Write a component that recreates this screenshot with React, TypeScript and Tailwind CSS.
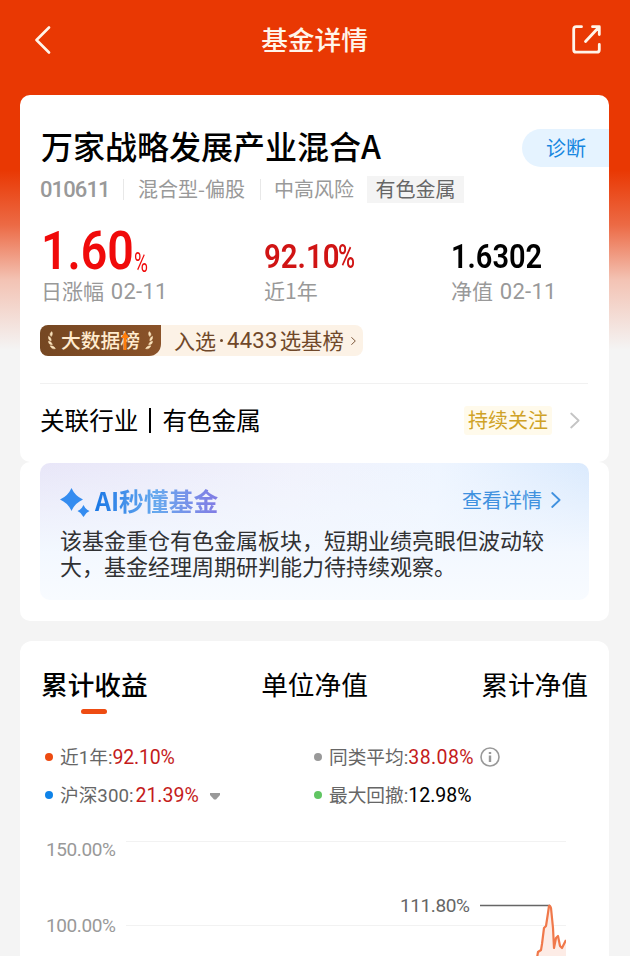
import type { ReactNode } from 'react';

const tabs = ['累计收益', '单位净值', '累计净值'];

function Chevron({ className }: { className: string }) {
  return (
    <svg viewBox="0 0 10 16" fill="none" stroke="currentColor" className={className} aria-hidden>
      <path d="M1.2 1 8.6 8 1.2 15" strokeWidth="1.8" strokeLinecap="round" strokeLinejoin="round" />
    </svg>
  );
}

function Laurel({ className }: { className: string }) {
  return (
    <svg viewBox="0 0 9 22" fill="#fbe3bd" stroke="#fbe3bd" strokeWidth="0.5" className={className} aria-hidden>
      <path d="M4.3 1C1.8 3 1.8 5 3.6 6.6 5.2 5 5.3 3 4.3 1Z" />
      <path d="M.5 6.2C.1 9.4 1.3 11 3.6 11.4 3.8 9 2.6 7.2.5 6.2Z" />
      <path d="M.4 11.8C.7 14.8 2.4 16 4.9 15.8 4.5 13.4 2.9 12.1.4 11.8Z" />
      <path d="M2.3 17C3.6 19.8 5.6 20.9 8.3 20.2 7.2 17.9 5.2 16.8 2.3 17Z" />
    </svg>
  );
}

function Header() {
  return (
    <header className="flex h-[95px] items-start justify-between pl-[34px] pr-[29px] text-[#fff5ea]">
      <svg viewBox="0 0 17 28" fill="none" stroke="currentColor" className="mt-[26px] h-7 w-[17px]" aria-hidden>
        <path d="M15 1.5 2.5 14 15 26.5" strokeWidth="2.6" strokeLinecap="round" strokeLinejoin="round" />
      </svg>
      <h1 className="mt-[26px] pl-[6px] text-[26.7px] font-medium leading-[26px]">基金详情</h1>
      <svg viewBox="0 0 29 29" fill="none" stroke="currentColor" className="mt-[25px] h-[29px] w-[29px]" aria-hidden>
        <path
          d="M9.5 1.7H4.2Q1.7 1.7 1.7 4.2V24.7Q1.7 27.2 4.2 27.2H24.8Q27.3 27.2 27.3 24.7V19.5M20.5 1.7H27.3V9.5M27 2 13.5 16.5"
          strokeWidth="2.8"
          strokeLinecap="round"
          strokeLinejoin="round"
        />
      </svg>
    </header>
  );
}

type StatProps = {
  label: string;
  date?: string;
  className: string;
  children: ReactNode;
};

function Stat({ label, date, className, children }: StatProps) {
  return (
    <div className={className}>
      {children}
      <p className="mt-[2px] whitespace-nowrap">
        {label} {date && <span className="ml-[2px] font-['Roboto'] text-[22px] tracking-[0.3px]">{date}</span>}
      </p>
    </div>
  );
}

function FundCard() {
  return (
    <section className="h-[367px] rounded-[10px] bg-white pl-5">
      <div className="flex h-[72px] items-end justify-between">
        <h2 className="mb-[6px] pl-px text-[32px] font-medium leading-[32px] text-black">万家战略发展产业混合A</h2>
        <button className="flex h-[38px] w-[87px] items-center rounded-l-full bg-[#e5f3ff] pl-6 text-[20px] text-[#1686df]">
          诊断
        </button>
      </div>

      <div className="mt-[9px] flex h-[27px] items-center whitespace-nowrap text-[20px] leading-none text-[#999]">
        <span className="w-[83px] font-['Roboto'] text-[22px] font-medium tracking-[-0.9px]">010611</span>
        <span className="h-[21px] w-px bg-[#e8e8e8]" />
        <span className="w-[136px] pb-px pl-[14px]">混合型-偏股</span>
        <span className="h-[21px] w-px bg-[#e8e8e8]" />
        <span className="w-[106px] pb-px pl-[13px]">中高风险</span>
        <span className="flex h-[27px] w-[97px] items-center justify-center bg-[#f4f4f4] pb-px text-[#666]">有色金属</span>
      </div>

      <div className="mt-[24px] flex h-[78px] text-[21px] leading-[22px] text-[#999]">
        <Stat label="日涨幅" date="02-11" className="w-[224px] pl-px">
          <p className="flex h-[50px] items-start font-['Roboto'] text-[#f00a0a]">
            <span className="w-[93px]">
              <span className="mt-px block w-[106px] origin-left scale-x-[0.86] text-[54px] font-semibold leading-[46px]">1.60</span>
            </span>
            <span className="mt-[22px] block w-5 origin-left scale-x-[0.68] text-[28px] leading-[28px]">%</span>
          </p>
        </Stat>
        <Stat label="近1年" className="w-[187px]">
          <p className="flex h-[50px] pt-[12px] font-['Roboto'] text-[33px] font-semibold leading-[36px] text-[#d01414]">
            <span className="w-[74px]">
              <span className="block w-[83px] origin-left scale-x-[0.89]">92.10</span>
            </span>
            <span className="block origin-left scale-x-[0.7] font-medium">%</span>
          </p>
        </Stat>
        <Stat label="净值" date="02-11" className="w-[130px]">
          <p className="h-[50px] pt-[12px] font-['Roboto'] text-[33px] font-semibold leading-[36px] text-black">
            <span className="inline-block origin-left scale-x-[0.88]">1.6302</span>
          </p>
        </Stat>
      </div>

      <div className="mt-5 flex h-[31px] w-[323px] items-center rounded-[8px] bg-[#fcf2e6] text-[21px] leading-none text-[#70482a]">
        <div className="flex h-full w-[121px] items-center justify-between rounded-[8px] rounded-tr-none rounded-br-[12px] bg-linear-to-r from-[#754722] to-[#8a5229] px-2 text-[19.8px] font-medium text-[#ffebcf]">
          <Laurel className="h-[21px] w-[8px]" />
          <span className="relative whitespace-nowrap pb-px">
            大数据榜
            <svg viewBox="0 0 8 18" fill="#ff7d0a" className="absolute left-[60px] top-[2px] h-[18px] w-2" aria-hidden>
              <path d="M4 0 8 6H5.5V18H2.5V6H0Z" />
            </svg>
          </span>
          <Laurel className="h-[21px] w-[8px] -scale-x-100" />
        </div>
        <span className="flex w-[185px] items-center whitespace-nowrap pl-[13px]">
          <span className="pb-px">入选</span>
          <span className="mx-[4px] h-[3px] w-[3px] rounded-full bg-[#70482a]" />
          <span className="mr-[2px] font-['Roboto'] text-[22px] tracking-[0.3px]">4433</span>
          <span className="pb-px text-[21.4px]">选基榜</span>
        </span>
        <Chevron className="ml-[5px] h-[8px] w-[5px]" />
      </div>

      <div className="mr-[21px] mt-[27px] flex h-[74px] items-center border-t border-[#f1f1f1] text-[24.6px] leading-none text-black">
        <span className="pb-[2px]">关联行业</span>
        <span className="mx-[11px] h-[25px] w-[2px] bg-black" />
        <span className="pb-[2px]">有色金属</span>
        <span className="ml-auto flex h-[29px] w-[88px] items-center justify-center rounded-[3px] bg-[#fffaeb] pb-px text-[20px] text-[#cfa226]">
          持续关注
        </span>
        <Chevron className="ml-[18px] mr-[8px] h-[17px] w-[10px] text-[#c4c4c4]" />
      </div>
    </section>
  );
}

function AiSummary() {
  return (
    <section className="h-[159px] rounded-[10px] bg-white px-5 pt-px">
      <div className="h-[137px] rounded-[10px] bg-[linear-gradient(to_bottom,transparent_0%,#f3f8ff_65%,#f8fbff_100%),linear-gradient(100deg,#e8e6f8_0%,#f1f2fc_45%,#eef5ff_70%,#d7e8fd_100%)] pl-5">
        <div className="flex h-[74px] items-center">
          <svg viewBox="0 0 30 29" fill="#358cf0" className="mt-[5px] h-[29px] w-[30px]" aria-hidden>
            <path d="M11.5 0Q15 8 23 11.5 15 15 11.5 23 8 15 0 11.5 8 8 11.5 0Z" />
            <path d="M23.5 17Q25.3 21.2 29.5 23 25.3 24.8 23.5 29 21.7 24.8 17.5 23 21.7 21.2 23.5 17Z" />
          </svg>
          <h3 className="mb-px ml-[5px] bg-linear-to-r from-[#1777e5] via-[#67a9ee] to-[#817be4] bg-clip-text text-[24.8px] font-bold leading-[34px] text-transparent">
            AI秒懂基金
          </h3>
          <a className="ml-auto flex items-center text-[20px] leading-none text-[#4091df]">
            查看详情
            <Chevron className="ml-[9px] mr-[28px] h-[16px] w-[10px]" />
          </a>
        </div>
        <div className="-mt-[11px] whitespace-nowrap text-[22px] leading-[26px] text-[#303133]">
          <p>该基金重仓有色金属板块，短期业绩亮眼但波动较</p>
          <p>大，基金经理周期研判能力待持续观察。</p>
        </div>
      </div>
    </section>
  );
}

type LegendProps = {
  dot: string;
  label: string;
  value: string;
  valueColor: string;
  children?: ReactNode;
};

function Legend({ dot, label, value, valueColor, children }: LegendProps) {
  return (
    <div className="flex h-[38px] items-center whitespace-nowrap font-['Roboto','Noto_Sans_CJK_SC',sans-serif] text-[18.7px] leading-none text-[#666]">
      <span className={`mr-[7px] h-[8px] w-[8px] rounded-full ${dot}`} />
      <span className="pt-[2px]">{label}:</span>
      <span className={`pt-[2px] text-[19.5px] ${valueColor}`}>{value}</span>
      {children}
    </div>
  );
}

function PerformanceCard() {
  return (
    <section className="mt-5 h-[315px] rounded-t-[12px] bg-white">
      <nav className="flex h-[74px] justify-between px-[21px] pt-[30px] text-[26.7px] leading-[26px] text-black">
        {tabs.map((tab, i) => (
          <div key={tab} className={i === 0 ? 'font-medium' : ''}>
            {tab}
            {i === 0 && <span className="mx-auto mt-[12px] block h-[5px] w-[26px] rounded-full bg-[#ee4c12]" />}
          </div>
        ))}
      </nav>

      <div className="grid grid-cols-[269px_1fr] pl-[25px] pt-[23px]">
        <Legend dot="bg-[#ed4b11]" label="近1年" value="92.10%" valueColor="text-[#c41b1b] tracking-[-0.2px]" />
        <Legend dot="bg-[#999]" label="同类平均" value="38.08%" valueColor="text-[#c41b1b] tracking-[0.4px]">
          <svg viewBox="0 0 20 20" fill="none" stroke="#999" className="ml-[6px] h-5 w-5" aria-hidden>
            <circle cx="10" cy="10" r="9" strokeWidth="1.6" />
            <path d="M10 8.5V15M10 5V7" strokeWidth="2.4" />
          </svg>
        </Legend>
        <Legend dot="bg-[#0f83e8]" label="沪深300" value="21.39%" valueColor="pl-[2px] text-[#c41b1b]">
          <svg viewBox="0 0 10 7" fill="#999" className="ml-[11px] mt-[2px] h-[7px] w-[10px]" aria-hidden>
            <path d="M0 0H10V2L6 6.5H4L0 2Z" />
          </svg>
        </Legend>
        <Legend dot="bg-[#60c562]" label="最大回撤" value="12.98%" valueColor="text-black" />
      </div>

      <div className="relative mt-[26px] h-[116px] pl-[26px] font-['Roboto'] text-[19px] leading-[20px] tracking-[-0.4px] text-[#999]">
        <div className="flex h-[76px] items-start">
          <span className="w-[80px]">150.00%</span>
          <span className="mt-px h-px w-[440px] bg-[#f2f2f2]" />
        </div>
        <div className="flex items-start">
          <span className="w-[80px]">100.00%</span>
          <span className="mt-[9px] h-px w-[440px] bg-[#f2f2f2]" />
        </div>
        <span className="absolute left-[380px] top-[56px] text-[#666]">111.80%</span>
        <svg viewBox="0 0 88 54" fill="none" className="absolute left-[458px] top-[62px] h-[54px] w-[88px]" aria-hidden>
          <path d="M59 54 60 49 63 47 66 26 68 25 71 4 73 6 76 47 79 34 82 46 88 38V54Z" fill="#fdece6" />
          <path d="M2 3.5H72" stroke="#666" strokeWidth="1.5" />
          <path
            d="M59 56 60 50 63 48 64 42 66 26 68 24 70 11 71 4Q72 3 73 6L74 16 75 26 76 46 78 36 80 34 82 44 84 46 88 38"
            stroke="#f0784a"
            strokeWidth="2.2"
            strokeLinejoin="round"
          />
        </svg>
      </div>
    </section>
  );
}

export default function App() {
  return (
    <main className="h-[956px] w-[630px] overflow-hidden bg-[#f4f4f4] bg-[linear-gradient(to_bottom,#e93803_0px,#e93803_170px,#ec6a45_225px,#f3c3b4_280px,#f4f4f4_350px)] font-['Noto_Sans_CJK_SC',sans-serif]">
      <Header />
      <div className="ml-5 w-[589px]">
        <FundCard />
        <AiSummary />
        <PerformanceCard />
      </div>
    </main>
  );
}
